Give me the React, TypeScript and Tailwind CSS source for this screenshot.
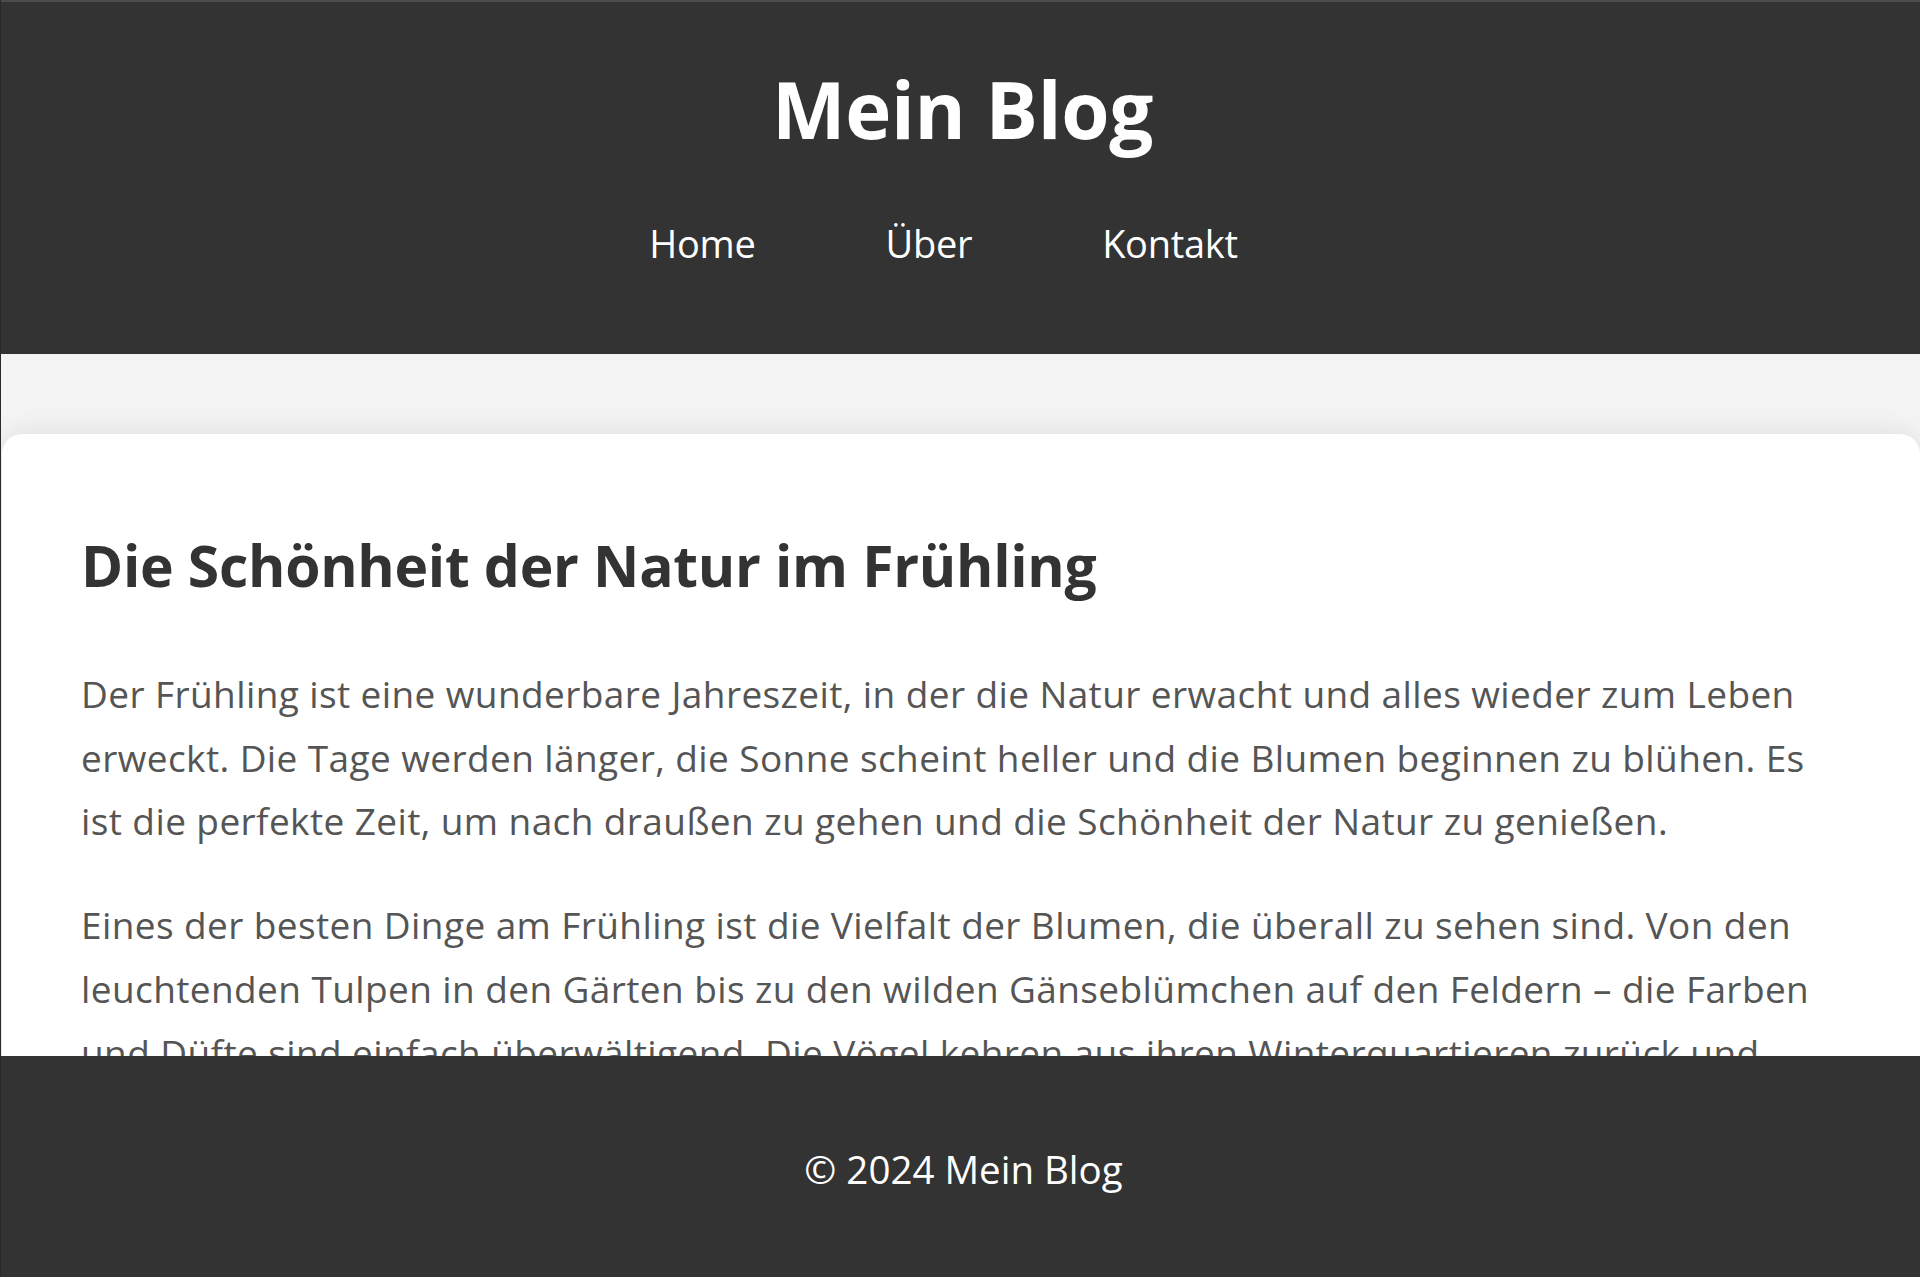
const paragraphs: string[][] = [
  [
    'Der Frühling ist eine wunderbare Jahreszeit, in der die Natur erwacht und alles wieder zum Leben',
    'erweckt. Die Tage werden länger, die Sonne scheint heller und die Blumen beginnen zu blühen. Es',
    'ist die perfekte Zeit, um nach draußen zu gehen und die Schönheit der Natur zu genießen.',
  ],
  [
    'Eines der besten Dinge am Frühling ist die Vielfalt der Blumen, die überall zu sehen sind. Von den',
    'leuchtenden Tulpen in den Gärten bis zu den wilden Gänseblümchen auf den Feldern – die Farben',
    'und Düfte sind einfach überwältigend. Die Vögel kehren aus ihren Winterquartieren zurück und',
  ],
];

const navItems = ['Home', 'Über', 'Kontakt'];

export default function App() {
  return (
    <div
      className="h-screen w-full overflow-hidden bg-[#f4f4f4] border-l border-[#2b2b2b]"
      style={{ fontFamily: '"Open Sans", "Noto Sans", sans-serif' }}
    >
      {/* Header */}
      <header className="bg-[#333] border-t-2 border-[#4d4d4d] pt-[60px] pb-[82px] text-white">
        <h1 className="pl-[4px] text-center text-[78px] leading-[94px] font-bold tracking-[-0.3px]">
          Mein Blog
        </h1>
        <nav className="mt-[59px] pr-[34px]">
          <ul className="flex justify-center gap-[130px]">
            {navItems.map(item => (
              <li key={item}>
                <a href="#" className="text-[38px] leading-[57px] tracking-[-0.3px] text-white">
                  {item}
                </a>
              </li>
            ))}
          </ul>
        </nav>
      </header>

      {/* Article card */}
      <main className="pt-[80px] pl-[1px]">
        <article className="bg-white rounded-[20px] shadow-[0_0_30px_rgba(0,0,0,0.1)] pl-[79px] pr-[60px] pt-[97px] pb-[80px]">
          <h2 className="text-[57px] leading-[68px] font-bold tracking-[-0.3px] text-[#333]">
            Die Schönheit der Natur im Frühling
          </h2>
          <div className="mt-[63px] flex flex-col gap-[40px]">
            {paragraphs.map((lines, i) => (
              <p key={i} className="text-[37px] leading-[63.7px] tracking-[0.4px] text-[#555]">
                {lines.map((line, j) => (
                  <span key={j} className="block whitespace-nowrap">
                    {line}
                  </span>
                ))}
              </p>
            ))}
          </div>
        </article>
      </main>

      {/* Footer */}
      <footer className="fixed bottom-0 left-0 right-0 h-[221px] bg-[#333] border-l border-[#2b2b2b] pt-[84px] text-center text-white">
        <p className="pl-[6px] text-[38.5px] leading-[58px]">© 2024 Mein Blog</p>
      </footer>
    </div>
  );
}
